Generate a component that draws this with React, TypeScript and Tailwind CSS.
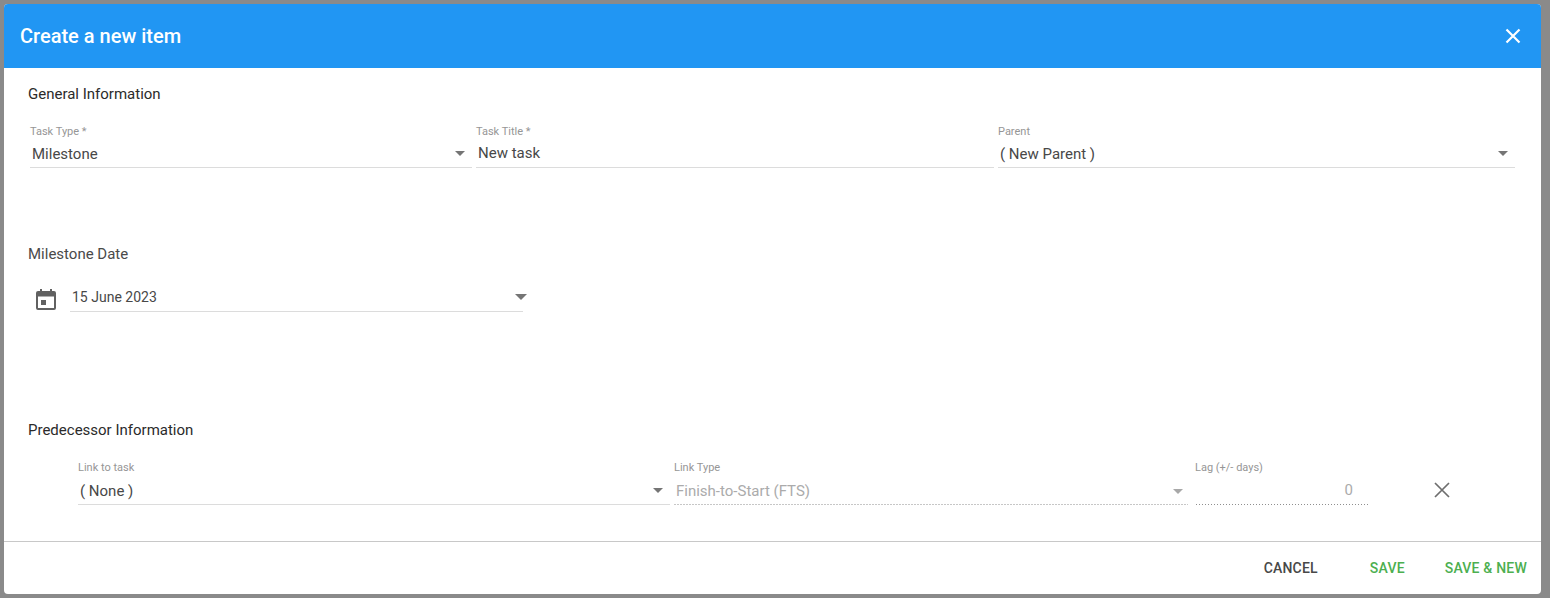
import React from "react";

const Caret = ({ light, big }: { light?: boolean; big?: boolean }) => (
  <svg width={big ? 12 : 10} height={big ? 6 : 5} viewBox="0 0 10 5" className="shrink-0">
    <path d="M0 0h10L5 5z" fill={light ? "#a8a8a8" : "#757575"} />
  </svg>
);

const dotted =
  "bg-[linear-gradient(to_right,#8f8f8f_1px,transparent_1px)] bg-[length:3px_1px] bg-bottom bg-repeat-x";

const Field = ({
  label,
  value,
  className,
  caretClass,
  disabled,
  box,
}: {
  label: string;
  value: string;
  className: string;
  caretClass: string;
  disabled?: boolean;
  box: string;
}) => (
  <div className={className}>
    <div className="h-[14px] text-[11px] leading-[14px] text-[#969696] whitespace-nowrap">{label}</div>
    <div className={`flex items-center justify-between ${box} ${disabled ? dotted : "border-b border-[#dcdcdc]"}`}>
      <span className={`pl-[2px] text-[15px] leading-[22px] whitespace-nowrap ${disabled ? "text-[#ababab]" : "text-[#484848]"}`}>
        {value}
      </span>
      <span className={caretClass}>
        <Caret light={disabled} />
      </span>
    </div>
  </div>
);

export default function App() {
  return (
    <div className="h-[598px] w-[1550px] overflow-hidden bg-[#8a8a8a] p-[4px] pr-[9px] font-['Roboto',sans-serif]">
      <div className="flex h-[590px] flex-col overflow-hidden rounded-[4px] bg-white">
        <header className="flex h-[64px] shrink-0 items-center justify-between bg-[#2196f3] pl-[16px] pr-[20px]">
          <h1 className="text-[20px] font-medium leading-[32px] text-white">Create a new item</h1>
          <svg width="16" height="16" viewBox="0 0 16 16">
            <path d="M1.5 1.500l13 13M14.500 1.500l-13 13" stroke="#fff" strokeWidth="2.2" fill="none" />
          </svg>
        </header>

        <main className="flex-1 pl-[24px]">
          <h2 className="mt-[16px] h-[20px] text-[15px] font-normal leading-[20px] text-[#2b2b2b]">General Information</h2>
          <div className="mt-[21px] flex gap-[4px] pl-[2px]">
            <Field label="Task Type *" value="Milestone" className="w-[442px]" caretClass="pr-[7px]" box="h-[29px] pt-[1px]" />
            <Field label="Task Title *" value="New task" className="w-[518px]" caretClass="hidden" box="h-[29px]" />
            <Field label="Parent" value="( New Parent )" className="w-[517px]" caretClass="pr-[7px]" box="h-[29px] pt-[1px]" />
          </div>

          <div className="mt-[76px] h-[20px] text-[15px] leading-[20px] text-[#4a4a4a]">Milestone Date</div>
          <div className="mt-[17px] flex items-end pl-[7px]">
            <svg width="22" height="24" viewBox="0 0 22 24" className="mb-[1px] mr-[13px] shrink-0">
              <path
                fillRule="evenodd"
                d="M5 2h2v2h8V2h2v2h2a2 2 0 0 1 2 2v15a2 2 0 0 1-2 2H3a2 2 0 0 1-2-2V6a2 2 0 0 1 2-2h2zM3 9.500V21h16V9.500zM6 13h5v5H6z"
                fill="#616161"
              />
            </svg>
            <div className="flex h-[31px] w-[453px] items-center justify-between border-b border-[#dcdcdc] pl-[2px] pt-[2px]">
              <span className="text-[14px] text-[#484848]">15 June 2023</span>
              <span className="mr-[-4px]">
                <Caret big />
              </span>
            </div>
          </div>

          <h2 className="mt-[108px] h-[20px] text-[15px] font-normal leading-[20px] text-[#2b2b2b]">Predecessor Information</h2>
          <div className="mt-[21px] flex pl-[50px]">
            <Field label="Link to task" value="( None )" className="w-[592px]" caretClass="pr-[7px]" box="h-[30px] pt-[2px]" />
            <Field label="Link Type" value="Finish-to-Start (FTS)" className="ml-[4px] w-[514px]" caretClass="pr-[5px]" box="h-[30px] pt-[2px]" disabled />
            <div className="ml-[7px] w-[173px]">
              <div className="h-[14px] text-[11px] leading-[14px] text-[#969696]">Lag (+/- days)</div>
              <div className={`flex h-[30px] items-center justify-end pr-[15px] pt-[1px] text-[15px] text-[#ababab] ${dotted}`}>0</div>
            </div>
            <svg width="16" height="16" viewBox="0 0 16 16" className="ml-[66px] mt-[21px] shrink-0">
              <path d="M1 1l14 14M15 1L1 15" stroke="#6e6e6e" strokeWidth="1.7" fill="none" />
            </svg>
          </div>
        </main>

        <footer className="flex h-[53px] shrink-0 items-center justify-end border-t border-[#c8c8c8] pr-[14px] text-[14px] font-medium leading-[20px] tracking-[0.2px]">
          <button className="text-[#484848]">CANCEL</button>
          <button className="ml-[52px] text-[#4caf50]">SAVE</button>
          <button className="ml-[40px] text-[#4caf50]">SAVE &amp; NEW</button>
        </footer>
      </div>
    </div>
  );
}
